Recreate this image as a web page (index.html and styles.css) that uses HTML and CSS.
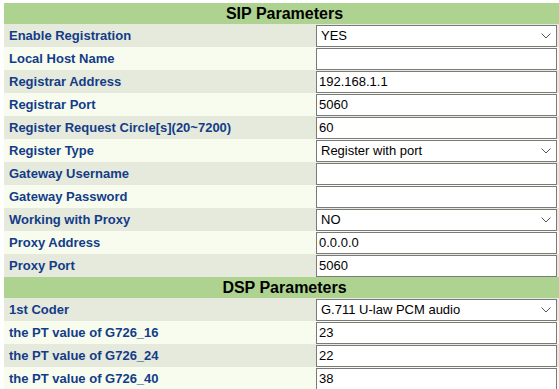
FILE: index.html
```html
<!DOCTYPE html>
<html lang="en">
<head>
  <meta charset="UTF-8">
  <meta name="viewport" content="width=device-width, initial-scale=1.0">
  <title>SIP Parameters</title>
  <link rel="stylesheet" href="styles.css">
</head>
<body>
  <table class="params">
    <tr class="section"><th colspan="2">SIP Parameters</th></tr>
    <tr class="odd">
      <td class="label">Enable Registration</td>
      <td class="field">
        <div class="select-wrap">
          <select><option>YES</option><option>NO</option></select>
          <svg class="chevron" width="10" height="6" viewBox="0 0 10 6"><path d="M0.5 0.5 L5 5 L9.5 0.5" fill="none" stroke="#555" stroke-width="1"/></svg>
        </div>
      </td>
    </tr>
    <tr class="even">
      <td class="label">Local Host Name</td>
      <td class="field"><input type="text" value=""></td>
    </tr>
    <tr class="odd">
      <td class="label">Registrar Address</td>
      <td class="field"><input type="text" id="registrar" value="192.168.1.1"></td>
    </tr>
    <tr class="even">
      <td class="label">Registrar Port</td>
      <td class="field"><input type="text" value="5060"></td>
    </tr>
    <tr class="odd">
      <td class="label">Register Request Circle[s](20~7200)</td>
      <td class="field"><input type="text" value="60"></td>
    </tr>
    <tr class="even">
      <td class="label">Register Type</td>
      <td class="field">
        <div class="select-wrap">
          <select><option>Register with port</option></select>
          <svg class="chevron" width="10" height="6" viewBox="0 0 10 6"><path d="M0.5 0.5 L5 5 L9.5 0.5" fill="none" stroke="#555" stroke-width="1"/></svg>
        </div>
      </td>
    </tr>
    <tr class="odd">
      <td class="label">Gateway Username</td>
      <td class="field"><input type="text" value=""></td>
    </tr>
    <tr class="even">
      <td class="label">Gateway Password</td>
      <td class="field"><input type="password" value=""></td>
    </tr>
    <tr class="odd">
      <td class="label">Working with Proxy</td>
      <td class="field">
        <div class="select-wrap">
          <select><option>NO</option><option>YES</option></select>
          <svg class="chevron" width="10" height="6" viewBox="0 0 10 6"><path d="M0.5 0.5 L5 5 L9.5 0.5" fill="none" stroke="#555" stroke-width="1"/></svg>
        </div>
      </td>
    </tr>
    <tr class="even">
      <td class="label">Proxy Address</td>
      <td class="field"><input type="text" value="0.0.0.0"></td>
    </tr>
    <tr class="odd">
      <td class="label">Proxy Port</td>
      <td class="field"><input type="text" value="5060"></td>
    </tr>

    <tr class="section"><th colspan="2">DSP Parameters</th></tr>
    <tr class="odd">
      <td class="label">1st Coder</td>
      <td class="field">
        <div class="select-wrap">
          <select><option>G.711 U-law PCM audio</option></select>
          <svg class="chevron" width="10" height="6" viewBox="0 0 10 6"><path d="M0.5 0.5 L5 5 L9.5 0.5" fill="none" stroke="#555" stroke-width="1"/></svg>
        </div>
      </td>
    </tr>
    <tr class="even">
      <td class="label">the PT value of G726_16</td>
      <td class="field"><input type="text" value="23"></td>
    </tr>
    <tr class="odd">
      <td class="label">the PT value of G726_24</td>
      <td class="field"><input type="text" value="22"></td>
    </tr>
    <tr class="even">
      <td class="label">the PT value of G726_40</td>
      <td class="field"><input type="text" value="38"></td>
    </tr>
  </table>

  <script>
    // put the caret at the end of the registrar address
    const registrar = document.getElementById("registrar");
    registrar.focus();
    registrar.setSelectionRange(registrar.value.length, registrar.value.length);
  </script>
</body>
</html>
```

FILE: styles.css
```css
html, body {
  overflow: hidden;
}

body {
  margin: 0;
  padding: 3px 0 0 4px;
  background-color: #ffffff;
  font-family: "Liberation Sans", Arial, sans-serif;
}

.params {
  width: 561px;
  border-collapse: collapse;
  border-spacing: 0;
}

.section th {
  height: 21px;
  padding: 0;
  background-color: #aed390;
  color: #000000;
  font-size: 16px;
  font-weight: bold;
  text-align: center;
}

.odd {
  background-color: #e6eadc;
}

.even {
  background-color: #f7fcef;
}

.label {
  width: 307px;
  height: 23px;
  padding: 0 0 0 5px;
  color: #133c88;
  font-size: 13px;
  font-weight: bold;
}

.field {
  height: 23px;
  padding: 0;
}

input, select {
  display: block;
  width: 241px;
  height: 22px;
  box-sizing: border-box;
  margin: 0;
  border: 1px solid #7a7a7a;
  border-radius: 0;
  background: #ffffff;
  color: #000000;
  font-family: "Liberation Sans", Arial, sans-serif;
  font-size: 13px;
}

input {
  padding: 0 2px;
  outline: none;
}

select {
  appearance: none;
  -webkit-appearance: none;
  padding: 0 4px;
}

.select-wrap {
  position: relative;
  width: 241px;
}

.chevron {
  position: absolute;
  right: 6px;
  top: 8px;
  pointer-events: none;
}
```
